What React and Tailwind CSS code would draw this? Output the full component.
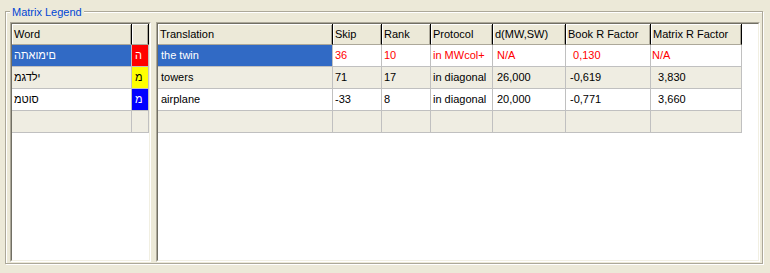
import React from "react"

// words are stored reversed: the old grid paints Hebrew in visual (left-to-right) order
const leftRows = [
  { word: "םימואתה", letter: "ה", swatch: "bg-[#ff0000] text-white", selected: true },
  { word: "ילדגמ", letter: "מ", swatch: "bg-[#ffff00] text-black" },
  { word: "סוטמ", letter: "מ", swatch: "bg-[#0000ff] text-white" },
]

const columns = [
  { label: "Translation", w: "w-[175px]", pad: "pl-[3px]" },
  { label: "Skip", w: "w-[49px]", pad: "pl-[2px]" },
  { label: "Rank", w: "w-[49px]", pad: "pl-[2px]" },
  { label: "Protocol", w: "w-[62px]", pad: "pl-[2px]" },
  { label: "d(MW,SW)", w: "w-[73px]", pad: "pl-[4px]" },
  { label: "Book R Factor", w: "w-[85px]", pad: "pl-[4px]" },
  { label: "Matrix R Factor", w: "w-[91px]", pad: "pl-[1px]" },
]

const rows = [
  { cells: ["the twin", "36", "10", "in MWcol+", "N/A", " 0,130", "N/A"], red: true },
  { cells: ["towers", "71", "17", "in diagonal", "26,000", "-0,619", "  3,830"] },
  { cells: ["airplane", "-33", "8", "in diagonal", "20,000", "-0,771", "  3,660"] },
]

const headerCell =
  "h-[21px] leading-[20px] border-r border-r-black border-b border-b-[#aca899] bg-[#ece9d8] shadow-[inset_1px_1px_0_#fff,inset_-1px_0_0_#aca899] whitespace-nowrap overflow-hidden"
const cell = "h-[22px] leading-[21px] border-r border-b border-[#c0c0c0] whitespace-pre overflow-hidden"

// sunken 2px frame used by both list views
const Sunken = ({ className, children }) => (
  <div className={`border border-t-[#aca899] border-l-[#aca899] border-r-white border-b-white ${className}`}>
    <div className="h-full border border-t-[#716f64] border-l-[#716f64] border-r-[#f1efe2] border-b-[#f1efe2] bg-white overflow-hidden">
      {children}
    </div>
  </div>
)

export default function App() {
  return (
    <div className="w-[770px] h-[273px] bg-[#ece9d8] pt-[11px] pl-[5px] text-[11px] text-black font-['Liberation_Sans',Arial,sans-serif]">
      <div className="relative w-[758px] h-[253px] border border-[#aca899] shadow-[inset_1px_1px_0_#fff,1px_1px_0_#fff] flex gap-[5px] pl-[4px] pt-[10px]">
        <span className="absolute left-[4px] top-[-6px] px-[2px] bg-[#ece9d8] text-[#0046d5] leading-[13px]">
          Matrix Legend
        </span>

        <Sunken className="w-[141px] h-[240px]">
          <div className="flex">
            <div className={`${headerCell} w-[120px] pl-[2px]`}>Word</div>
            <div className={`${headerCell} w-[17px]`}></div>
          </div>
          {leftRows.map((r, i) => (
            <div key={i} className={`flex ${i % 2 ? "bg-[#efede2]" : "bg-white"}`}>
              <div className={`${cell} w-[120px] pl-[2px] ${r.selected ? "bg-[#316ac5] text-white" : ""}`}>
                {r.word}
              </div>
              <div className={`${cell} w-[17px] pl-[3px] ${r.swatch}`}>{r.letter}</div>
            </div>
          ))}
          <div className="flex bg-[#efede2] w-[137px]">
            <div className={`${cell} w-[120px]`}></div>
            <div className={`${cell} w-[17px]`}></div>
          </div>
        </Sunken>

        <Sunken className="w-[604px] h-[240px]">
          <div className="flex">
            {columns.map((c) => (
              <div key={c.label} className={`${headerCell} ${c.w} pl-[2px]`}>
                {c.label}
              </div>
            ))}
          </div>
          {rows.map((r, i) => (
            <div key={i} className={`flex w-[584px] ${i % 2 ? "bg-[#efede2]" : "bg-white"}`}>
              {r.cells.map((v, j) => (
                <div
                  key={j}
                  className={`${cell} ${columns[j].w} ${columns[j].pad} ${
                    r.red ? (j === 0 ? "bg-[#316ac5] text-white" : "text-[#ff0000]") : ""
                  }`}
                >
                  {v}
                </div>
              ))}
            </div>
          ))}
          <div className="flex w-[584px] bg-[#efede2]">
            {columns.map((c) => (
              <div key={c.label} className={`${cell} ${c.w}`}></div>
            ))}
          </div>
        </Sunken>
      </div>
    </div>
  )
}
